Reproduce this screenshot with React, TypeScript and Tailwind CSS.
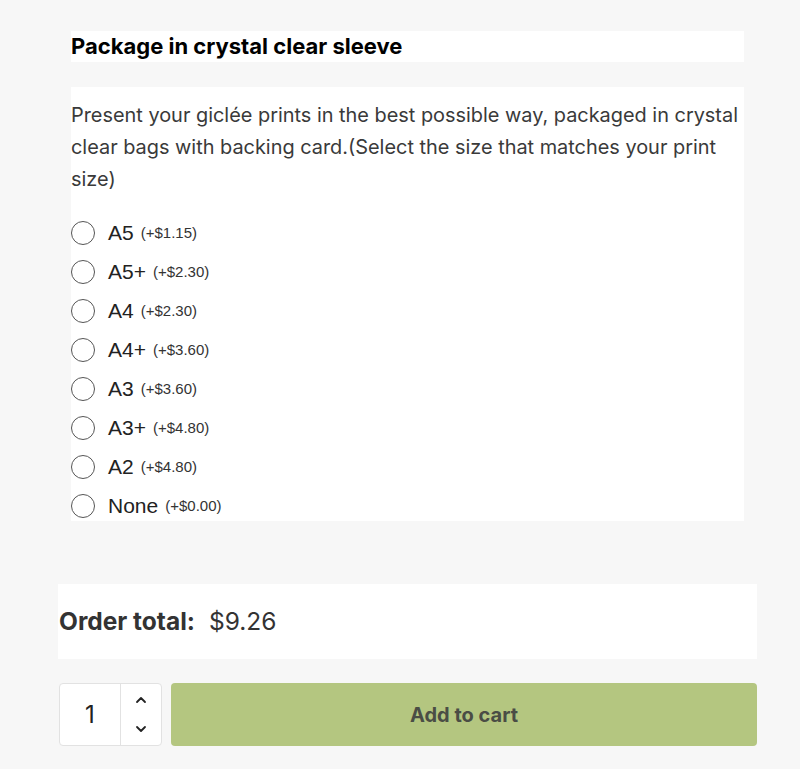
import React, { useState } from 'react';

const options = [
  { label: 'A5', price: '(+$1.15)' },
  { label: 'A5+', price: '(+$2.30)' },
  { label: 'A4', price: '(+$2.30)' },
  { label: 'A4+', price: '(+$3.60)' },
  { label: 'A3', price: '(+$3.60)' },
  { label: 'A3+', price: '(+$4.80)' },
  { label: 'A2', price: '(+$4.80)' },
  { label: 'None', price: '(+$0.00)' },
];

export default function App() {
  const [qty, setQty] = useState(1);
  const [selected, setSelected] = useState<string | null>(null);

  return (
    <div className="min-h-[769px] w-[800px] bg-[#f7f7f7] font-['Inter',sans-serif] text-[#333]">
      <div className="pt-[31px] pl-[58px] pr-[43px]">
        <div className="ml-[13px] mr-[13px]">
          <h3 className="h-[31px] bg-white text-[22px] font-bold leading-[31px] text-black">
            Package in crystal clear sleeve
          </h3>

          <div className="mt-[25px] bg-white pt-[12px] pb-[3px]">
            <p className="text-[19.9px] leading-[32px] text-[#3a3a3a]">
              Present your giclée prints in the best possible way, packaged in crystal clear bags with backing card.(Select the size that matches your print size)
            </p>
            <div className="mt-[26px] flex flex-col gap-[15px]">
              {options.map((o) => (
                <label
                  key={o.label}
                  className="flex h-[24px] cursor-pointer items-center font-['Liberation_Sans',Arial,sans-serif]"
                  onClick={() => setSelected(o.label)}
                >
                  <span className="flex h-[24px] w-[24px] items-center justify-center rounded-full border border-[#555] bg-white">
                    {selected === o.label && <span className="h-[12px] w-[12px] rounded-full bg-[#333]" />}
                  </span>
                  <span className="ml-[13px] text-[21px] text-[#222]">{o.label}</span>
                  <span className="ml-[7px] text-[15px] text-[#333]">{o.price}</span>
                </label>
              ))}
            </div>
          </div>
        </div>

        <div className="mt-[63px] flex h-[75px] items-center bg-white">
          <span className="pl-px text-[24.5px] font-bold text-[#333]">Order total:</span>
          <span className="ml-[14px] text-[24.5px] text-[#333]">$9.26</span>
        </div>

        <div className="mt-[24px] flex h-[63px] gap-[9px]">
          <div className="flex w-[103px] ml-px overflow-hidden rounded-[4px] border border-[#e2e2e2] bg-white">
            <div className="flex flex-1 items-center justify-center text-[24px] text-[#222]">{qty}</div>
            <div className="flex w-[41px] flex-col items-center justify-center gap-[21px] border-l border-[#e2e2e2]">
              <button onClick={() => setQty(qty + 1)} className="text-[#222]">
                <svg width="12" height="8" viewBox="0 0 12 8" fill="none" stroke="currentColor" strokeWidth="1.8" strokeLinecap="round" strokeLinejoin="round">
                  <path d="M2 6l4-4 4 4" />
                </svg>
              </button>
              <button onClick={() => setQty(Math.max(1, qty - 1))} className="text-[#222]">
                <svg width="12" height="8" viewBox="0 0 12 8" fill="none" stroke="currentColor" strokeWidth="1.8" strokeLinecap="round" strokeLinejoin="round">
                  <path d="M2 2l4 4 4-4" />
                </svg>
              </button>
            </div>
          </div>
          <button className="flex-1 rounded-[4px] bg-[#b4c680] text-[20px] font-bold text-[#4a4d45]">
            Add to cart
          </button>
        </div>
      </div>
    </div>
  );
}
